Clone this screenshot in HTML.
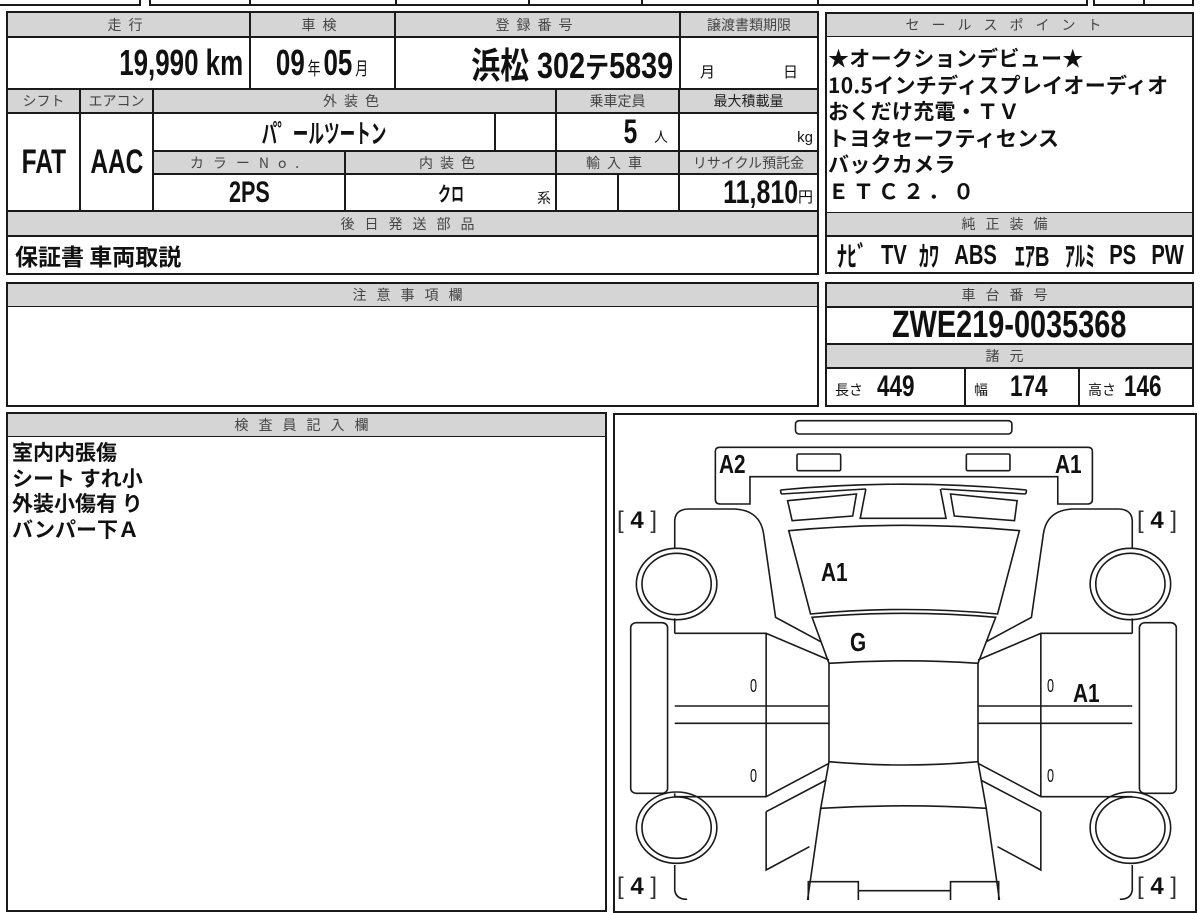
<!DOCTYPE html>
<html><head><meta charset="utf-8"><style>
body{margin:0;width:1200px;height:900px;overflow:hidden;background:#fff;position:relative;font-family:"Liberation Sans","Noto Sans CJK JP",sans-serif;color:#111}
.c{position:absolute;border:1px solid #1a1a1a;box-sizing:border-box;display:flex;align-items:center;justify-content:center;white-space:nowrap}
.h{background:#d5d5d5;color:#444;font-size:14px;letter-spacing:7px;font-family:"Noto Sans CJK JP",sans-serif}
.n{font-family:"Liberation Sans","Noto Sans CJK JP",sans-serif;font-weight:bold;color:#111}
.j{font-family:"Noto Sans CJK JP",sans-serif;font-weight:bold}
.t{position:absolute;white-space:nowrap}
.b{position:absolute;border:2px solid #1a1a1a;box-sizing:border-box}
.q{display:inline-block;transform:scaleX(.72);transform-origin:center}
.qr{display:inline-block;transform:scaleX(.72);transform-origin:right center}
.ql{display:inline-block;transform:scaleX(.75);transform-origin:left center}
</style></head><body>
<!-- top strip -->
<div class="b" style="left:-2px;top:-10px;width:143px;height:16px"></div>
<div class="b" style="left:149px;top:-10px;width:670px;height:16px"></div>
<div class="c" style="left:249px;top:-10px;width:1px;height:16px"></div>
<div class="c" style="left:395px;top:-10px;width:1px;height:16px"></div>
<div class="c" style="left:528px;top:-10px;width:1px;height:16px"></div>
<div class="c" style="left:641px;top:-10px;width:1px;height:16px"></div>
<div class="b" style="left:740px;top:-10px;width:348px;height:16px;border-left:none"></div>
<div class="b" style="left:1093px;top:-10px;width:101px;height:16px"></div>
<div class="c" style="left:1143px;top:-10px;width:1px;height:16px"></div>

<!-- main left table -->
<div class="b" style="left:6px;top:11px;width:813px;height:264px"></div>
<div class="c h" style="left:7px;top:12px;width:243px;height:25px">走行</div>
<div class="c h" style="left:250px;top:12px;width:145px;height:25px">車検</div>
<div class="c h" style="left:395px;top:12px;width:285px;height:25px">登録番号</div>
<div class="c h" style="left:680px;top:12px;width:138px;height:25px;letter-spacing:0">譲渡書類期限</div>
<div class="c n" style="left:7px;top:37px;width:243px;height:52px;justify-content:flex-end;padding-right:6px;font-size:36px"><span class="qr">19,990 km</span></div>
<div class="c n" style="left:250px;top:37px;width:145px;height:52px;font-size:36px"><span class="q">09<span style="font-size:18px;font-weight:normal;margin:0 4px">年</span>05<span style="font-size:18px;font-weight:normal;margin-left:4px">月</span></span></div>
<div class="c n" style="left:395px;top:37px;width:285px;height:52px;justify-content:flex-end;padding-right:6px;font-size:36px"><span class="qr" style="transform:scaleX(.8)">浜松 302<span style="font-size:30px">テ</span>5839</span></div>
<div class="c" style="left:680px;top:37px;width:138px;height:52px;font-size:15px;align-items:flex-end;padding-bottom:6px;justify-content:space-around">月<span style="margin-left:30px">日</span></div>

<div class="c h" style="left:7px;top:89px;width:73px;height:24px;letter-spacing:0">シフト</div>
<div class="c h" style="left:80px;top:89px;width:73px;height:24px;letter-spacing:0">エアコン</div>
<div class="c h" style="left:153px;top:89px;width:403px;height:24px">外装色</div>
<div class="c h" style="left:556px;top:89px;width:123px;height:24px;letter-spacing:0">乗車定員</div>
<div class="c h" style="left:679px;top:89px;width:139px;height:24px;letter-spacing:0;color:#222">最大積載量</div>

<div class="c n" style="left:7px;top:113px;width:73px;height:98px;font-size:34px"><span class="q">FAT</span></div>
<div class="c n" style="left:80px;top:113px;width:73px;height:98px;font-size:34px"><span class="q">AAC</span></div>
<div class="c j" style="left:153px;top:113px;width:342px;height:38px;font-size:26px"><span class="q" style="transform:scaleX(.6)">パ゜ールツートン</span></div>
<div class="c" style="left:495px;top:113px;width:61px;height:38px"></div>
<div class="c n" style="left:556px;top:113px;width:123px;height:38px;font-size:34px;justify-content:flex-end;padding-right:10px"><span class="q">5</span><span style="font-size:14px;font-weight:normal;margin:10px 0 0 14px">人</span></div>
<div class="c" style="left:679px;top:113px;width:139px;height:38px;justify-content:flex-end;padding:10px 4px 0 0;font-size:15px">kg</div>

<div class="c h" style="left:153px;top:151px;width:192px;height:23px;letter-spacing:9px">カラーNo.</div>
<div class="c h" style="left:345px;top:151px;width:211px;height:23px">内装色</div>
<div class="c h" style="left:556px;top:151px;width:123px;height:23px">輸入車</div>
<div class="c h" style="left:679px;top:151px;width:139px;height:23px;letter-spacing:0">リサイクル預託金</div>

<div class="c n" style="left:153px;top:174px;width:192px;height:37px;font-size:30px"><span class="q">2PS</span></div>
<div class="c j" style="left:345px;top:174px;width:211px;height:37px;font-size:20px"><span class="q" style="transform:scaleX(.65)">クロ</span><span style="position:absolute;right:4px;bottom:2px;font-size:14px;font-weight:normal">系</span></div>
<div class="c" style="left:556px;top:174px;width:62px;height:37px"></div>
<div class="c" style="left:618px;top:174px;width:61px;height:37px"></div>
<div class="c n" style="left:679px;top:174px;width:139px;height:37px;font-size:32px;justify-content:flex-end;padding-right:4px"><span class="qr" style="transform:scaleX(.78)">11,810</span><span style="font-size:15px;font-weight:normal;margin-top:8px">円</span></div>

<div class="c h" style="left:7px;top:211px;width:811px;height:25px;letter-spacing:10px">後日発送部品</div>
<div class="c j" style="left:7px;top:236px;width:811px;height:38px;font-size:23px;justify-content:flex-start;padding-left:7px">保証書 車両取説</div>

<!-- sales point -->
<div class="b" style="left:825px;top:12px;width:369px;height:262px"></div>
<div class="c h" style="left:826px;top:13px;width:367px;height:24px;letter-spacing:12px">セールスポイント</div>
<div class="c j" style="left:826px;top:37px;width:367px;height:175px;border:none;flex-direction:column;align-items:flex-start;justify-content:flex-start;padding:8px 0 0 2px;font-size:21px;line-height:26.5px;letter-spacing:0.3px">
<div>★オークションデビュー★</div><div>10.5インチディスプレイオーディオ</div><div>おくだけ充電・ＴＶ</div><div>トヨタセーフティセンス</div><div>バックカメラ</div><div style="letter-spacing:4px">ＥＴＣ２．０</div></div>
<div class="c h" style="left:826px;top:212px;width:367px;height:24px;letter-spacing:10px">純正装備</div>
<div class="c n" style="left:826px;top:236px;width:367px;height:38px;font-size:28px;justify-content:space-between;padding:0 2px 0 4px"><span class="q">ﾅﾋﾞ</span><span class="q">TV</span><span class="q">ｶﾜ</span><span class="q">ABS</span><span class="q">ｴｱB</span><span class="q">ｱﾙﾐ</span><span class="q">PS</span><span class="q">PW</span></div>

<!-- caution -->
<div class="b" style="left:6px;top:282px;width:813px;height:125px"></div>
<div class="c h" style="left:7px;top:283px;width:811px;height:24px;letter-spacing:10px">注意事項欄</div>

<!-- chassis -->
<div class="b" style="left:825px;top:282px;width:369px;height:125px"></div>
<div class="c h" style="left:826px;top:283px;width:367px;height:24px;letter-spacing:10px">車台番号</div>
<div class="c n" style="left:826px;top:307px;width:367px;height:37px;font-size:38px"><span class="q" style="transform:scaleX(.76)">ZWE219-0035368</span></div>
<div class="c h" style="left:826px;top:344px;width:367px;height:24px;letter-spacing:10px">諸元</div>
<div class="c n" style="left:826px;top:368px;width:139px;height:38px;font-size:30px;justify-content:flex-start;padding-left:8px"><span style="font-size:14px;font-weight:normal;margin:6px 14px 0 0">長さ</span><span class="ql">449</span></div>
<div class="c n" style="left:965px;top:368px;width:114px;height:38px;font-size:30px;justify-content:flex-start;padding-left:8px"><span style="font-size:14px;font-weight:normal;margin:6px 22px 0 0">幅</span><span class="ql">174</span></div>
<div class="c n" style="left:1079px;top:368px;width:114px;height:38px;font-size:30px;justify-content:flex-start;padding-left:8px"><span style="font-size:14px;font-weight:normal;margin:6px 8px 0 0">高さ</span><span class="ql">146</span></div>

<!-- inspector -->
<div class="b" style="left:6px;top:412px;width:601px;height:500px"></div>
<div class="c h" style="left:7px;top:413px;width:599px;height:24px;letter-spacing:10px">検査員記入欄</div>
<div class="t j" style="left:12px;top:440px;font-size:21px;line-height:25.5px">室内内張傷<br>シート すれ小<br>外装小傷有 り<br>バンパー下Ａ</div>

<!-- diagram -->
<div class="b" style="left:613px;top:413px;width:584px;height:500px"></div>
<svg style="position:absolute;left:610px;top:410px" width="590" height="490" viewBox="0 0 1568 1470" preserveAspectRatio="none">
<g fill="none" stroke="#1a1a1a" stroke-width="1.6">
<rect x="493" y="32" width="575" height="40" rx="10" vector-effect="non-scaling-stroke"/>
<path vector-effect="non-scaling-stroke" d="M292,112 H1270 Q1282,112 1282,124 V268 Q1282,282 1268,282 H1190 V200 H372 V282 H294 Q280,282 280,268 V124 Q280,112 292,112 Z"/>
<rect x="497" y="132" width="116" height="50" rx="4" vector-effect="non-scaling-stroke"/>
<rect x="947" y="132" width="116" height="50" rx="4" vector-effect="non-scaling-stroke"/>
<path vector-effect="non-scaling-stroke" d="M453,240 Q780,205 1107,240 M455,252 L680,237 M880,237 L1105,252 M453,240 L455,252 M1107,240 L1105,252"/>
<path vector-effect="non-scaling-stroke" d="M472,272 L655,252 L645,318 L484,332 Z M905,252 L1082,272 L1075,332 L915,318 Z M680,237 L665,325 H893 L878,237"/>
<path vector-effect="non-scaling-stroke" d="M475,362 Q780,330 1088,362 L1030,612 Q780,585 533,612 Z"/>
<path vector-effect="non-scaling-stroke" d="M537,622 Q780,598 1025,622 L978,760 Q780,745 582,760 Z"/>
<path vector-effect="non-scaling-stroke" d="M582,760 V1055 Q780,1075 978,1055 V760"/>
<path vector-effect="non-scaling-stroke" d="M582,1055 L560,1195 Q780,1180 1000,1195 L978,1055"/>
<path vector-effect="non-scaling-stroke" d="M560,1195 L525,1470 M1000,1195 L1035,1470"/>
<path vector-effect="non-scaling-stroke" d="M172,415 V330 Q175,297 210,297 H330 Q398,300 408,370 L440,622 L560,695"/>
<path vector-effect="non-scaling-stroke" d="M172,670 H415 L582,750 M415,670 V1160 M172,888 H582 M172,940 H582 M172,1160 H415 L582,1060 M172,625 V670 M172,1160 V1150"/>
<path vector-effect="non-scaling-stroke" d="M415,1205 L575,1110 M415,1205 V1380 L530,1310 M172,1365 V1440 Q175,1468 205,1468"/>
<rect x="55" y="638" width="98" height="512" rx="15" vector-effect="non-scaling-stroke"/>
<circle cx="177" cy="522" r="107" vector-effect="non-scaling-stroke"/><circle cx="177" cy="522" r="92" vector-effect="non-scaling-stroke"/>
<circle cx="177" cy="1253" r="107" vector-effect="non-scaling-stroke"/><circle cx="177" cy="1253" r="92" vector-effect="non-scaling-stroke"/>
<path vector-effect="non-scaling-stroke" d="M1388,415 V330 Q1385,297 1350,297 H1230 Q1162,300 1152,370 L1120,622 L1000,695"/>
<path vector-effect="non-scaling-stroke" d="M1388,670 H1145 L978,750 M1145,670 V1160 M1388,888 H978 M1388,940 H978 M1388,1160 H1145 L978,1060 M1388,625 V670"/>
<path vector-effect="non-scaling-stroke" d="M1145,1205 L985,1110 M1145,1205 V1380 L1030,1310 M1388,1365 V1440 Q1385,1468 1355,1468"/>
<rect x="1407" y="638" width="98" height="512" rx="15" vector-effect="non-scaling-stroke"/>
<circle cx="1383" cy="522" r="107" vector-effect="non-scaling-stroke"/><circle cx="1383" cy="522" r="92" vector-effect="non-scaling-stroke"/>
<circle cx="1383" cy="1253" r="107" vector-effect="non-scaling-stroke"/><circle cx="1383" cy="1253" r="92" vector-effect="non-scaling-stroke"/>
<path vector-effect="non-scaling-stroke" d="M527,1470 V1415 H660 V1470 M905,1470 V1415 H1033 V1470 M660,1442 H905"/>
</g></svg>
<div class="t n" style="left:719px;top:449px;font-size:26px"><span class="ql" style="transform:scaleX(.8)">A2</span></div>
<div class="t n" style="left:1055px;top:449px;font-size:26px"><span class="ql" style="transform:scaleX(.8)">A1</span></div>
<div class="t n" style="left:821px;top:557px;font-size:26px"><span class="ql" style="transform:scaleX(.8)">A1</span></div>
<div class="t n" style="left:850px;top:627px;font-size:26px"><span class="ql" style="transform:scaleX(.8)">G</span></div>
<div class="t n" style="left:1073px;top:678px;font-size:26px"><span class="ql" style="transform:scaleX(.8)">A1</span></div>
<div class="t" style="left:750px;top:676px;font-size:18px"><span class="ql" style="transform:scaleX(.7)">0</span></div>
<div class="t" style="left:1047px;top:676px;font-size:18px"><span class="ql" style="transform:scaleX(.7)">0</span></div>
<div class="t" style="left:750px;top:766px;font-size:18px"><span class="ql" style="transform:scaleX(.7)">0</span></div>
<div class="t" style="left:1047px;top:766px;font-size:18px"><span class="ql" style="transform:scaleX(.7)">0</span></div>
<div class="t n" style="left:617px;top:507px;font-size:24px"><span style="font-weight:normal;color:#333">[</span> 4 <span style="font-weight:normal;color:#333">]</span></div>
<div class="t n" style="left:1137px;top:507px;font-size:24px"><span style="font-weight:normal;color:#333">[</span> 4 <span style="font-weight:normal;color:#333">]</span></div>
<div class="t n" style="left:617px;top:873px;font-size:24px"><span style="font-weight:normal;color:#333">[</span> 4 <span style="font-weight:normal;color:#333">]</span></div>
<div class="t n" style="left:1137px;top:873px;font-size:24px"><span style="font-weight:normal;color:#333">[</span> 4 <span style="font-weight:normal;color:#333">]</span></div>
</body></html>
